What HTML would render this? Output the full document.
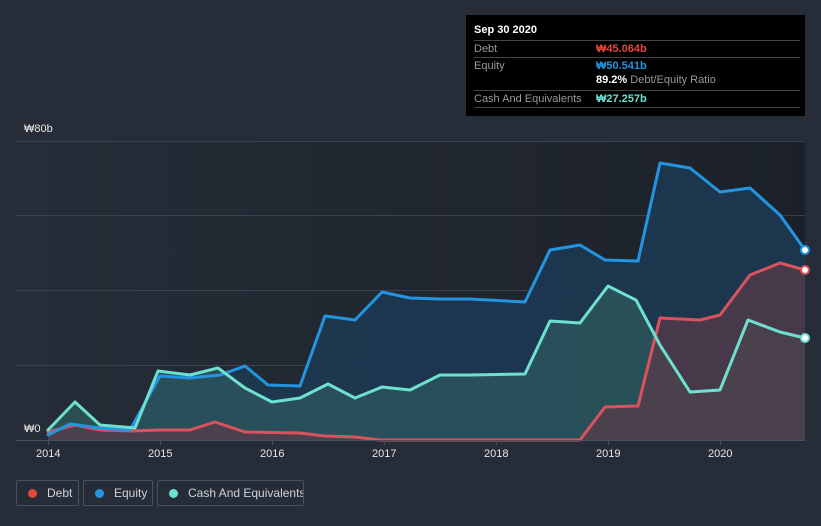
<!DOCTYPE html>
<html><head><meta charset="utf-8"><style>
body{margin:0;width:821px;height:526px;background:#262d38;font-family:"Liberation Sans",sans-serif;overflow:hidden;position:relative}
.tt{position:absolute;left:466px;top:15px;width:339px;height:101px;background:#000;color:#fff;font-size:11px}
.row{position:absolute;left:8px;width:326px;border-top:1px solid #444;height:16px;line-height:16px}
.l{color:#999;position:absolute;left:0}
.v{position:absolute;left:122px;font-weight:bold}
.leg{position:absolute;top:480px;height:26px;border:1px solid #4a515c;border-radius:2px;color:#cfd3d8;font-size:12px;line-height:24px;box-sizing:border-box;white-space:nowrap;overflow:hidden}
.dot{display:inline-block;width:9px;height:9px;border-radius:50%;margin:0 10px 0 11px;vertical-align:-1px}
.ax{position:absolute;top:448px;color:#e6e6e6;font-size:11px}
</style></head><body>
<svg width="821" height="526" style="position:absolute;left:0;top:0">
<defs><linearGradient id="bg" x1="0" x2="1"><stop offset="0" stop-color="#262d38"/><stop offset="1" stop-color="#1c2129"/></linearGradient></defs>
<rect x="16" y="141" width="789" height="299" fill="url(#bg)"/>
<g stroke="#3a414c" stroke-width="1">
<line x1="16" y1="141.5" x2="805" y2="141.5"/><line x1="16" y1="215.5" x2="805" y2="215.5"/><line x1="16" y1="290.5" x2="805" y2="290.5"/><line x1="16" y1="365.5" x2="805" y2="365.5"/></g>
<polygon fill="#1c3a55" fill-opacity="0.85" points="48,440 48,435 70,424 100,428 130,430 160,376 190,378 220,375 245,366 268,385 300,386 325,316 355,320 382,292 410,298 440,299 470,299 525,302 550,250 580,245 605,260 638,261 660,163 690,168 720,192 750,188 780,215 805,250 805,440"/>
<polygon fill="#2e5a5e" fill-opacity="0.75" points="48,440 48,430 75,402 100,425 135,428 158,371 190,375 218,368 245,388 272,402 300,398 328,384 355,398 382,387 410,390 440,375 470,375 525,374 550,321 580,323 608,286 636,300 660,345 690,392 720,390 748,320 780,332 805,338 805,440"/>
<polygon fill="#5a3a48" fill-opacity="0.7" points="48,440 48,432 75,425 100,430 130,431 160,430 190,430 215,422 245,432 300,433 325,436 355,437 380,440 580,440 605,407 638,406 660,318 700,320 720,315 750,275 780,263 805,270 805,440"/>
<g fill="none" stroke-width="3" stroke-linejoin="round" stroke-linecap="round">
<polyline stroke="#d9525e" points="48,432 75,425 100,430 130,431 160,430 190,430 215,422 245,432 300,433 325,436 355,437 380,440 580,440 605,407 638,406 660,318 700,320 720,315 750,275 780,263 805,270"/>
<polyline stroke="#2394df" points="48,435 70,424 100,428 130,430 160,376 190,378 220,375 245,366 268,385 300,386 325,316 355,320 382,292 410,298 440,299 470,299 525,302 550,250 580,245 605,260 638,261 660,163 690,168 720,192 750,188 780,215 805,250"/>
<polyline stroke="#6ee0cf" points="48,430 75,402 100,425 135,428 158,371 190,375 218,368 245,388 272,402 300,398 328,384 355,398 382,387 410,390 440,375 470,375 525,374 550,321 580,323 608,286 636,300 660,345 690,392 720,390 748,320 780,332 805,338"/>
</g>
<line x1="16" y1="440.5" x2="805" y2="440.5" stroke="#4a515c"/>
<g stroke="#4a515c"><line x1="48.5" y1="440" x2="48.5" y2="445"/><line x1="160.5" y1="440" x2="160.5" y2="445"/><line x1="272.5" y1="440" x2="272.5" y2="445"/><line x1="384.5" y1="440" x2="384.5" y2="445"/><line x1="496.5" y1="440" x2="496.5" y2="445"/><line x1="608.5" y1="440" x2="608.5" y2="445"/><line x1="720.5" y1="440" x2="720.5" y2="445"/></g>
<circle cx="805" cy="250" r="4" fill="#fff" stroke="#2394df" stroke-width="2"/>
<circle cx="805" cy="270" r="4" fill="#fff" stroke="#d9525e" stroke-width="2"/>
<circle cx="805" cy="338" r="4" fill="#fff" stroke="#6ee0cf" stroke-width="2"/>
</svg>
<div style="position:absolute;left:24px;top:123px;color:#e6e6e6;font-size:11px">₩80b</div>
<div style="position:absolute;left:24px;top:423px;color:#e6e6e6;font-size:11px">₩0</div>
<div class="ax" style="left:36px">2014</div><div class="ax" style="left:148px">2015</div><div class="ax" style="left:260px">2016</div><div class="ax" style="left:372px">2017</div><div class="ax" style="left:484px">2018</div><div class="ax" style="left:596px">2019</div><div class="ax" style="left:708px">2020</div>
<div class="tt">
<div style="position:absolute;left:8px;top:9px;font-weight:bold">Sep 30 2020</div>
<div class="row" style="top:25px"><span class="l">Debt</span><span class="v" style="color:#e8453c">₩45.064b</span></div>
<div class="row" style="top:42px"><span class="l">Equity</span><span class="v" style="color:#2394df">₩50.541b</span></div>
<div style="position:absolute;left:130px;top:59px"><b>89.2%</b> <span style="color:#999">Debt/Equity Ratio</span></div>
<div class="row" style="top:75px"><span class="l">Cash And Equivalents</span><span class="v" style="color:#6ee0cf">₩27.257b</span></div>
<div class="row" style="top:92px;height:0"></div>
</div>
<div class="leg" style="left:16px;width:63px"><span class="dot" style="background:#e8453c"></span>Debt</div>
<div class="leg" style="left:83px;width:70px"><span class="dot" style="background:#2394df"></span>Equity</div>
<div class="leg" style="left:157px;width:147px"><span class="dot" style="background:#6ee0cf"></span>Cash And Equivalents</div>
</body></html>
